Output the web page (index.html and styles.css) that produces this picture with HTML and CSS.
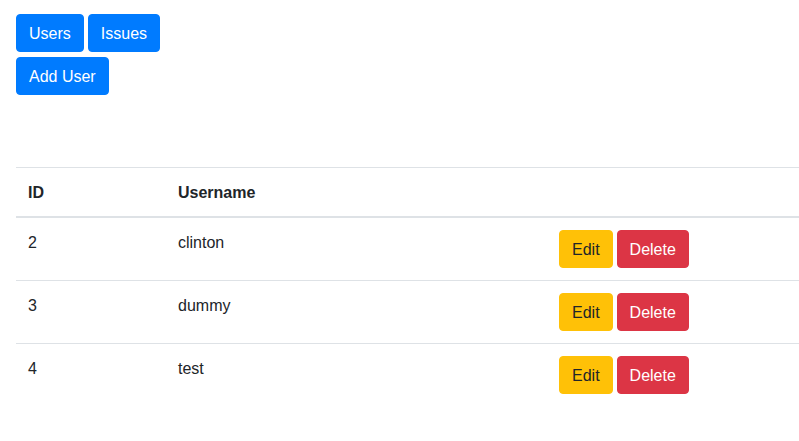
FILE: index.html
```html
<!DOCTYPE html>
<html>
<head>
<meta charset="utf-8">
<link rel="stylesheet" href="styles.css">
</head>
<body>
<div class="page">
  <div class="nav">
    <button class="btn btn-primary">Users</button>
    <button class="btn btn-primary">Issues</button>
  </div>
  <div class="toolbar">
    <button class="btn btn-primary">Add User</button>
  </div>
  <table class="table">
    <thead>
      <tr><th class="c-id">ID</th><th class="c-name">Username</th><th class="c-act"></th></tr>
    </thead>
    <tbody>
      <tr><td>2</td><td>clinton</td><td><div class="actions"><button class="btn btn-warning">Edit</button><button class="btn btn-danger">Delete</button></div></td></tr>
      <tr><td>3</td><td>dummy</td><td><div class="actions"><button class="btn btn-warning">Edit</button><button class="btn btn-danger">Delete</button></div></td></tr>
      <tr><td>4</td><td>test</td><td><div class="actions"><button class="btn btn-warning">Edit</button><button class="btn btn-danger">Delete</button></div></td></tr>
    </tbody>
  </table>
</div>
</body>
</html>
```
FILE: styles.css
```css
html, body {
  margin: 0;
  padding: 0;
  background: #fff;
}
body {
  font-family: "Liberation Sans", Arial, sans-serif;
  font-size: 16px;
  line-height: 1.5;
  color: #212529;
}
.page {
  padding: 14px 0 0 16px;
}
.nav {
  display: flex;
  gap: 4px;
}
.toolbar {
  display: flex;
  margin-top: 5px;
}
.btn {
  font-family: inherit;
  font-size: 16px;
  line-height: 24px;
  padding: 7px 12px 5px;
  border: 1px solid transparent;
  border-radius: 4px;
  cursor: pointer;
  display: inline-block;
}
.btn-primary { background: #007bff; border-color: #007bff; color: #fff; }
.btn-warning { background: #ffc107; border-color: #ffc107; color: #212529; }
.btn-danger { background: #dc3545; border-color: #dc3545; color: #fff; }
.table {
  margin-top: 72px;
  width: 783px;
  border-collapse: collapse;
}
.table th, .table td {
  padding: 12px;
  text-align: left;
  vertical-align: top;
  border-top: 1px solid #dee2e6;
}
.table td:not(:last-child), .table th {
  padding-top: 13px;
  padding-bottom: 11px;
}
.table thead th {
  border-bottom: 2px solid #dee2e6;
  font-weight: bold;
}
.c-id { width: 126px; }
.c-name { width: 357px; }
.actions {
  display: flex;
  gap: 4px;
}
```
